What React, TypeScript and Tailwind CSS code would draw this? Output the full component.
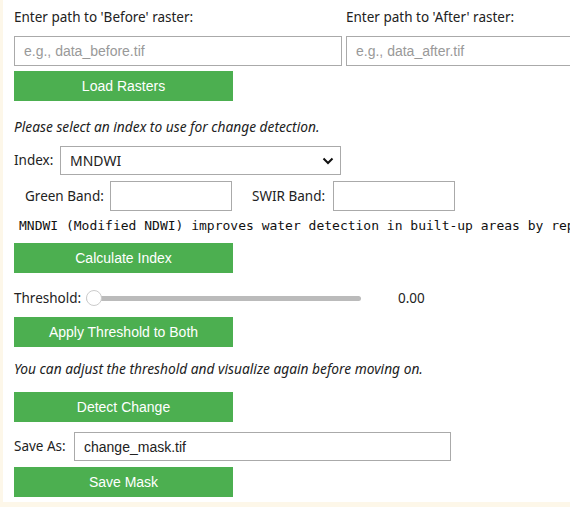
import React, { useState } from 'react';

const ui = { fontFamily: '"Noto Sans", "Open Sans", sans-serif' };
const arial = { fontFamily: '"Liberation Sans", Arial, sans-serif' };
const mono = { fontFamily: '"DejaVu Sans Mono", "Liberation Mono", monospace' };

function GreenButton({ label, className = '' }: { label: string; className?: string }) {
  return (
    <button
      className={`block w-[219px] h-[30px] bg-[#4caf50] text-white text-[14px] ${className}`}
      style={arial}
    >
      {label}
    </button>
  );
}

export default function App() {
  const [threshold] = useState(0);
  const [before, setBefore] = useState('');
  const [after, setAfter] = useState('');
  const [saveName, setSaveName] = useState('change_mask.tif');

  return (
    <div className="w-[570px] h-[507px] bg-[#fdf7e9] overflow-hidden">
      <div className="ml-[3px] h-[502px] bg-white pl-[11px] pt-[7px] text-[13.5px] text-[#222] overflow-hidden" style={ui}>
        {/* raster paths */}
        <div className="flex gap-[4px] w-[700px]">
          <div className="w-[328px]">
            <div className="h-[20px] leading-[20px]">Enter path to 'Before' raster:</div>
            <input
              value={before}
              onChange={(e) => setBefore(e.target.value)}
              placeholder="e.g., data_before.tif"
              className="mt-[9px] w-full h-[30px] border border-[#aaa] px-[9px] text-[14px] placeholder:text-[#999] outline-none"
              style={arial}
            />
          </div>
          <div className="w-[328px]">
            <div className="h-[20px] leading-[20px]">Enter path to 'After' raster:</div>
            <input
              value={after}
              onChange={(e) => setAfter(e.target.value)}
              placeholder="e.g., data_after.tif"
              className="mt-[9px] w-full h-[30px] border border-[#aaa] px-[9px] text-[14px] placeholder:text-[#999] outline-none"
              style={arial}
            />
          </div>
        </div>
        <GreenButton label="Load Rasters" className="mt-[5px]" />

        <p className="mt-[16px] h-[20px] leading-[20px] italic text-[13.75px]">Please select an index to use for change detection.</p>

        <div className="mt-[9px] flex items-center h-[29px]">
          <span className="w-[46px]">Index:</span>
          <div className="relative w-[281px] h-[29px] border border-[#aaa] flex items-center pl-[9px] text-[14px]">
            MNDWI
            <svg className="absolute right-[6px] top-[9px]" width="12" height="10" viewBox="0 0 12 10">
              <path d="M1.5 2.5 L6 7 L10.5 2.5" fill="none" stroke="#111" strokeWidth="2" />
            </svg>
          </div>
        </div>

        <div className="mt-[6px] flex items-center h-[30px] pl-[11px]">
          <span className="w-[85px]">Green Band:</span>
          <input className="w-[122px] h-[30px] border border-[#aaa] outline-none" />
          <span className="ml-[20px] w-[81px]">SWIR Band:</span>
          <input className="w-[122px] h-[30px] border border-[#aaa] outline-none" />
        </div>

        <div className="mt-[7px] pl-[5px] h-[16px] leading-[16px] text-[13px] whitespace-pre text-[#111]" style={mono}>
          MNDWI (Modified NDWI) improves water detection in built-up areas by replacing NIR with SWIR.
        </div>

        <GreenButton label="Calculate Index" className="mt-[9px]" />

        <div className="mt-[15px] flex items-center h-[20px]">
          <span className="w-[72px]">Threshold:</span>
          <div className="relative w-[275px] h-[16px] flex items-center">
            <div className="w-full h-[5px] rounded-full bg-[#bbb]" />
            <div className="absolute left-0 top-0 w-[16px] h-[16px] rounded-full bg-white border border-[#ccc]" />
          </div>
          <span className="ml-[37px] text-[13.5px]">{threshold.toFixed(2)}</span>
        </div>

        <GreenButton label="Apply Threshold to Both" className="mt-[9px]" />

        <p className="mt-[12px] h-[20px] leading-[20px] italic text-[13.75px]">You can adjust the threshold and visualize again before moving on.</p>

        <GreenButton label="Detect Change" className="mt-[13px]" />

        <div className="mt-[10px] flex items-center h-[29px]">
          <span className="w-[60px]">Save As:</span>
          <input
            value={saveName}
            onChange={(e) => setSaveName(e.target.value)}
            className="w-[377px] h-[29px] border border-[#aaa] px-[9px] text-[14px] outline-none"
            style={arial}
          />
        </div>

        <GreenButton label="Save Mask" className="mt-[6px]" />
      </div>
    </div>
  );
}
